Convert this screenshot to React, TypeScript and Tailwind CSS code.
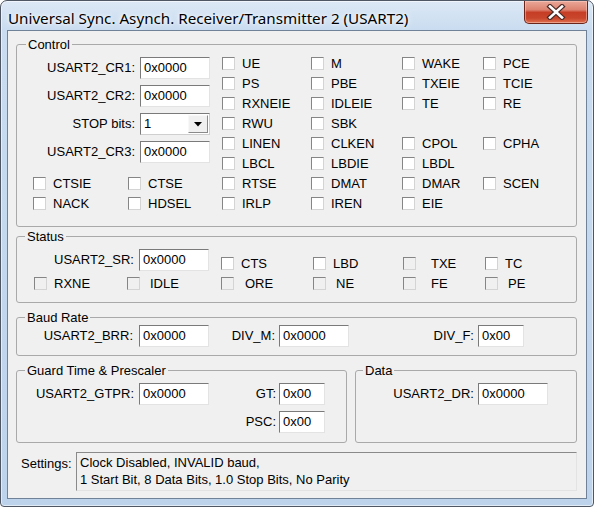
import React from "react";

const ui = "font-['Liberation_Sans',Arial,sans-serif]";

type CheckProps = { label: string; off?: boolean; gap?: string; className?: string };

function Check({ label, off, gap = "ml-[7px]", className = "" }: CheckProps) {
  return (
    <div className={`flex h-[20px] items-start ${className}`}>
      <span
        className={`mt-[3px] box-border h-[13px] w-[13px] shrink-0 border border-t-[#858585] border-l-[#858585] border-r-[#d4d4d4] border-b-[#d4d4d4] ${
          off ? "bg-[#f0f0f0]" : "bg-white"
        }`}
      />
      <span className={`${gap} whitespace-nowrap leading-[20px]`}>{label}</span>
    </div>
  );
}

function TextBox({ value, w = "w-[70px]" }: { value: string; w?: string }) {
  return (
    <div
      className={`box-border h-[22px] ${w} shrink-0 border border-t-[#7a7a7a] border-l-[#7a7a7a] border-r-[#e3e3e3] border-b-[#e3e3e3] bg-white pl-[3px] leading-[19px]`}
    >
      {value}
    </div>
  );
}

function Group({
  title,
  left = "left-[8px]",
  className = "",
  children,
}: {
  title: string;
  left?: string;
  className?: string;
  children: React.ReactNode;
}) {
  return (
    <div className={`relative rounded-[3px] border border-[#a9a9a9] ${className}`}>
      <span className={`absolute -top-[8px] ${left} bg-[#f0f0f0] px-[2px] leading-[15px]`}>{title}</span>
      {children}
    </div>
  );
}

function Field({ label, children }: { label: string; children: React.ReactNode }) {
  return (
    <div className="flex items-center">
      <div className="w-[118px] text-right">{label}</div>
      <div className="ml-[5px]">{children}</div>
    </div>
  );
}

function Combo({ value }: { value: string }) {
  return (
    <div className="box-border flex h-[22px] w-[70px] items-start border border-t-[#7a7a7a] border-l-[#7a7a7a] border-r-[#cfcfcf] border-b-[#cfcfcf] bg-white">
      <span className="flex-1 pl-[3px] leading-[19px]">{value}</span>
      <span className="mr-[1px] mt-[1px] box-border flex h-[18px] w-[20px] items-center justify-center border border-t-[#f8f8f8] border-l-[#f8f8f8] border-r-[#8a8a8a] border-b-[#8a8a8a] bg-[#f0f0f0]">
        <svg width="8" height="5" viewBox="0 0 8 5">
          <path d="M0 0h8L4 4.5z" fill="#000" />
        </svg>
      </span>
    </div>
  );
}

function CloseButton() {
  return (
    <div className="ml-auto mr-[5px] flex h-[23px] w-[64px] items-center justify-center rounded-b-[5px] border border-t-0 border-[#6b2419] bg-[linear-gradient(180deg,#eaa898_0%,#dc8270_40%,#c63d25_52%,#c8462c_78%,#e0704f_100%)] shadow-[inset_0_0_0_1px_rgba(255,220,210,0.45)]">
      <svg width="20" height="16" viewBox="0 0 20 16">
        <path d="M4 2.5L16 13.5M16 2.5L4 13.5" stroke="#4b2a26" strokeWidth="5" strokeLinecap="square" />
        <path d="M4 2.5L16 13.5M16 2.5L4 13.5" stroke="#ffffff" strokeWidth="2.6" strokeLinecap="square" />
      </svg>
    </div>
  );
}

const ctlGrid: (string | null)[][] = [
  ["UE", "M", "WAKE", "PCE"],
  ["PS", "PBE", "TXEIE", "TCIE"],
  ["RXNEIE", "IDLEIE", "TE", "RE"],
  ["RWU", "SBK", null, null],
  ["LINEN", "CLKEN", "CPOL", "CPHA"],
  ["LBCL", "LBDIE", "LBDL", null],
  ["RTSE", "DMAT", "DMAR", "SCEN"],
  ["IRLP", "IREN", "EIE", null],
];

export default function App() {
  return (
    <div
      className={`flex h-[507px] w-[594px] flex-col overflow-hidden rounded-t-[7px] rounded-b-[4px] border border-[#4e5763] bg-[linear-gradient(180deg,#dce8f5_0px,#c9dcf0_30px,#bdd3ec_100%)] text-[13px] text-black shadow-[inset_0_0_0_1px_rgba(255,255,255,0.55)] ${ui}`}
    >
      {/* title bar */}
      <div className="flex h-[29px] shrink-0 items-start">
        <div className="pl-[7px] pt-[7px] font-['Noto_Sans',sans-serif] text-[15.2px] leading-[20px] [text-shadow:0_0_6px_#fff,0_0_3px_#fff]">
          Universal Sync. Asynch. Receiver/Transmitter 2 (USART2)
        </div>
        <CloseButton />
      </div>

      {/* client */}
      <div className="mx-[6px] box-border h-[469px] shrink-0 border border-[#6f8297] bg-[#f0f0f0]">
        <Group title="Control" left="left-[9px]" className="ml-[8px] mt-[13px] w-[561px]">
          <div className="flex pb-[12px] pt-[9px]">
            <div className="flex w-[205px] shrink-0 flex-col pt-[3px]">
              <div className="flex flex-col gap-[6px]">
                <Field label="USART2_CR1:">
                  <TextBox value="0x0000" />
                </Field>
                <Field label="USART2_CR2:">
                  <TextBox value="0x0000" />
                </Field>
                <Field label="STOP bits:">
                  <Combo value="1" />
                </Field>
                <Field label="USART2_CR3:">
                  <TextBox value="0x0000" />
                </Field>
              </div>
              <div className="mt-[11px] grid grid-cols-[95px_95px] pl-[16px]">
                <Check label="CTSIE" />
                <Check label="CTSE" />
                <Check label="NACK" />
                <Check label="HDSEL" />
              </div>
            </div>
            <div className="grid grid-cols-[89px_91px_81px_80px]">
              {ctlGrid.flat().map((c, i) => (c ? <Check key={i} label={c} /> : <div key={i} className="h-[20px]" />))}
            </div>
          </div>
        </Group>

        <Group title="Status" className="ml-[8px] mt-[9px] w-[561px]">
          <div className="grid grid-cols-[93px_94px_92px_90px_82px_1fr] items-start pb-[8px] pl-[17px] pt-[12px]">
            <div className="col-span-2 flex items-center justify-end pr-[12px]">
              <span>USART2_SR:</span>
              <div className="ml-[5px]">
                <TextBox value="0x0000" />
              </div>
            </div>
            <Check label="CTS" className="mt-[5px]" />
            <Check label="LBD" className="mt-[5px]" />
            <Check label="TXE" off gap="ml-[15px]" className="mt-[5px]" />
            <Check label="TC" className="mt-[5px]" />
            <Check label="RXNE" off />
            <Check label="IDLE" off gap="ml-[10px]" />
            <Check label="ORE" off gap="ml-[11px]" />
            <Check label="NE" off gap="ml-[10px]" />
            <Check label="FE" off gap="ml-[15px]" />
            <Check label="PE" off gap="ml-[10px]" />
          </div>
        </Group>

        <Group title="Baud Rate" className="ml-[8px] mt-[14px] w-[561px]">
          <div className="flex items-center pb-[8px] pt-[7px]">
            <div className="w-[116px] text-right">USART2_BRR:</div>
            <div className="ml-[6px]">
              <TextBox value="0x0000" />
            </div>
            <div className="w-[66px] text-right">DIV_M:</div>
            <div className="ml-[4px]">
              <TextBox value="0x0000" />
            </div>
            <div className="w-[125px] text-right">DIV_F:</div>
            <div className="ml-[4px]">
              <TextBox value="0x00" w="w-[46px]" />
            </div>
          </div>
        </Group>

        <div className="ml-[8px] mt-[14px] flex w-[561px] gap-[8px]">
          <Group title="Guard Time &amp; Prescaler" className="w-[331px]">
            <div className="flex flex-col gap-[6px] pb-[9px] pt-[12px]">
              <div className="flex items-center">
                <div className="w-[117px] text-right">USART2_GTPR:</div>
                <div className="ml-[5px]">
                  <TextBox value="0x0000" />
                </div>
                <div className="w-[67px] text-right">GT:</div>
                <div className="ml-[3px]">
                  <TextBox value="0x00" w="w-[46px]" />
                </div>
              </div>
              <div className="flex items-center">
                <div className="w-[259px] text-right">PSC:</div>
                <div className="ml-[3px]">
                  <TextBox value="0x00" w="w-[46px]" />
                </div>
              </div>
            </div>
          </Group>
          <Group title="Data" left="left-[7px]" className="w-[222px]">
            <div className="flex items-center pt-[12px]">
              <div className="w-[118px] text-right">USART2_DR:</div>
              <div className="ml-[4px]">
                <TextBox value="0x0000" />
              </div>
            </div>
          </Group>
        </div>

        <div className="mt-[9px] flex">
          <div className="ml-[13px] w-[55px] pt-[3px] leading-[17px]">Settings:</div>
          <div className="box-border h-[39px] w-[501px] border border-t-[#8a8a8a] border-l-[#8a8a8a] border-r-[#e3e3e3] border-b-[#e3e3e3] bg-[#f0f0f0] pl-[3px] pt-[1px] leading-[17px]">
            <div>Clock Disabled, INVALID baud,</div>
            <div>1 Start Bit, 8 Data Bits, 1.0 Stop Bits, No Parity</div>
          </div>
        </div>
      </div>
    </div>
  );
}
